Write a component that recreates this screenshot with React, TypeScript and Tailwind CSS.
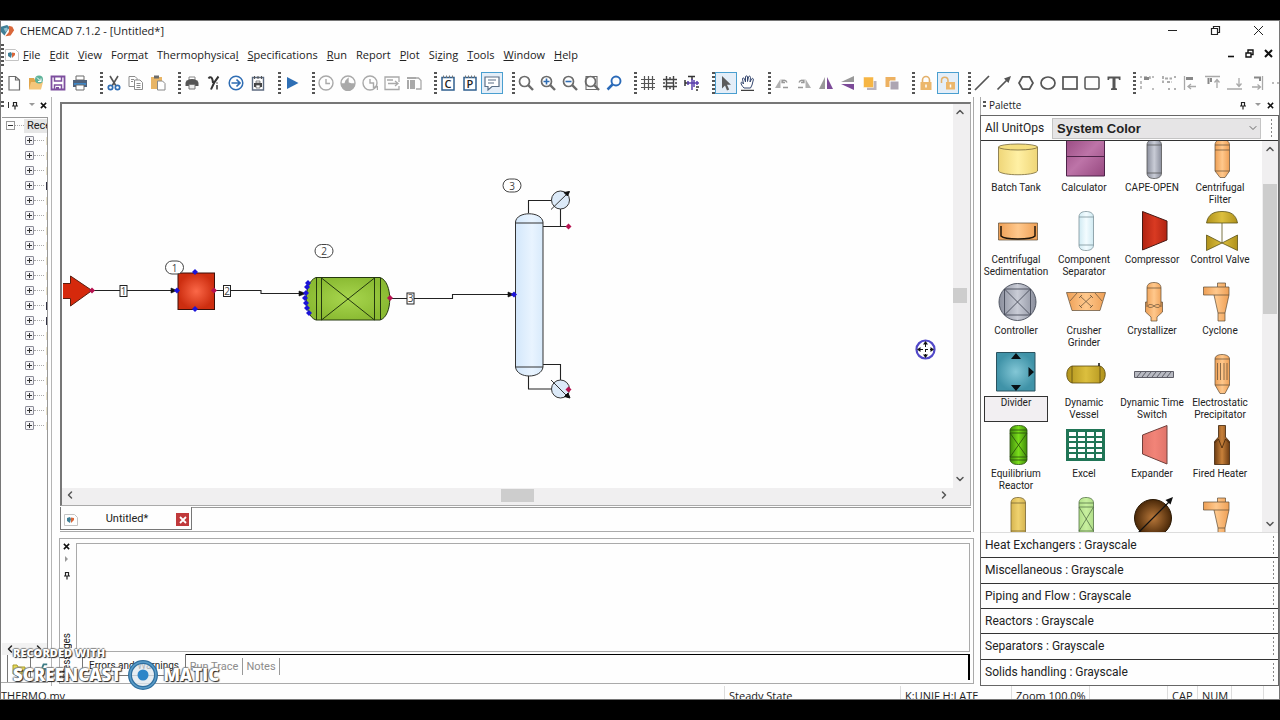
import type { ReactNode } from "react";
import { ChevronDown, ChevronLeft, ChevronRight, ChevronUp } from "lucide-react";

type Tool = { name: string; art: ReactNode; active?: boolean };

const G = "#6b6b6b";
const L = "#a9a9a9";

const lens = (color: string, inner?: ReactNode) => (
  <g fill="none" stroke={color} strokeWidth="1.7">
    <circle cx="6.5" cy="6.5" r="5" />
    <path d="M10.2 10.2 15 15" strokeWidth="2.4" />
    {inner}
  </g>
);

const clock = (inner: ReactNode) => (
  <g fill="none" stroke={L} strokeWidth="1.4">
    <circle cx="8" cy="8" r="7" />
    {inner}
  </g>
);

const clip = (letter: string) => (
  <g>
    <rect x="2" y="2.5" width="12" height="12.5" fill="#fff" stroke="#2f5f8f" strokeWidth="1.5" />
    <path d="M3.5 .5v2.5M6.5 .5v2.5M9.5 .5v2.5M12.5 .5v2.5" stroke="#777" strokeWidth="1" />
    <text x="8" y="13" fontSize="11" textAnchor="middle" fill="#222" className="font-['Open_Sans',sans-serif] font-semibold">{letter}</text>
  </g>
);

const groups: Tool[][] = [
  [
    { name: "New", art: <path d="M3 1.5h6.5L13.5 5v10H3zM9.5 1.5V5h4" fill="#fff" stroke={G} strokeWidth="1.2" /> },
    {
      name: "Open",
      art: (
        <g>
          <path d="M1 3h5l1 2h6v9H1z" fill="#e0a54c" />
          <path d="M3 7h12l-2 7.500H1z" fill="#f4c67b" />
          <circle cx="11" cy="4.500" r="4" fill="#5fb39a" />
          <path d="M9 2.500 13 6.500M13 3.500v3h-3" stroke="#fff" fill="none" />
        </g>
      ),
    },
    {
      name: "Save",
      art: (
        <g>
          <path d="M1.500 1.500h13v13h-13z" fill="#fff" stroke="#7d4e9e" strokeWidth="1.800" />
          <path d="M4.500 1v5h7V1M4.500 15v-5h7v5" fill="none" stroke="#7d4e9e" strokeWidth="1.500" />
          <path d="M6 12h3v2H6z" fill="#7d4e9e" />
        </g>
      ),
    },
    {
      name: "Print",
      art: (
        <g>
          <path d="M4 1h8v4H4z" fill="#fff" stroke={G} />
          <path d="M1 5h14v7H1z" fill="#50627a" />
          <path d="M2 8h12v2H2z" fill="#3f86c4" />
          <path d="M4 10h8v5H4z" fill="#fff" stroke={G} />
        </g>
      ),
    },
  ],
  [
    {
      name: "Cut",
      art: (
        <g fill="none">
          <path d="M4 1l6 10M12 1 6 11" stroke="#555" strokeWidth="1.600" />
          <circle cx="4.500" cy="12.500" r="2.200" stroke="#2f6db3" strokeWidth="1.700" />
          <circle cx="11.500" cy="12.500" r="2.200" stroke="#2f6db3" strokeWidth="1.700" />
        </g>
      ),
    },
    {
      name: "Copy",
      art: (
        <g fill="#fff" stroke="#8c8c8c">
          <path d="M1 1.500h6l2 2v8H1z" />
          <path d="M6.500 5h5.500l2.500 2.500v7h-8z" />
          <path d="M3 4.500h3M3 6.500h2M8.500 8.500h4M8.500 10.500h4M8.500 12.500h4" />
        </g>
      ),
    },
    {
      name: "Paste",
      art: (
        <g>
          <path d="M1 2h11v12H1z" fill="#e8b566" />
          <path d="M4 .5h5v3H4z" fill="#6b6b6b" />
          <path d="M7.500 6h5l2.500 2.500v6.500H7.500z" fill="#fff" stroke="#888" />
        </g>
      ),
    },
  ],
  [
    {
      name: "Report setup",
      art: (
        <g>
          <path d="M5 2h6v4H5z" fill="#fff" stroke="#888" />
          <path d="M1.500 8a6.500 4 0 0 1 13 0v3h-13z" fill="#555" />
          <path d="M5 9.500h6V14H5z" fill="#eee" stroke="#777" />
        </g>
      ),
    },
    {
      name: "Gamma",
      art: (
        <g fill="none" stroke="#333">
          <path d="M2.500 3.500C4.500 1 6.500 2 7 8M12.500 1.500C9.500 5 7 9 5 14.500" strokeWidth="2" />
          <path d="M11 10v4.500M11 7.500v1" strokeWidth="1.500" />
        </g>
      ),
    },
    {
      name: "Run stream",
      art: (
        <g fill="none" stroke="#2f6db3" strokeWidth="1.500">
          <circle cx="8" cy="8" r="6.800" />
          <path d="M3.500 8h8.500M8.500 4.500 12 8l-3.500 3.500" strokeWidth="1.700" />
        </g>
      ),
    },
    {
      name: "Clipboard report",
      art: (
        <g>
          <path d="M2.500 2.500h11v12.500h-11z" fill="#fff" stroke="#5d6b80" strokeWidth="1.400" />
          <path d="M4.500 1v3M8 1v3M11.500 1v3" stroke="#555" />
          <path d="M4 8h8v4H4z" fill="#444" />
          <path d="M6 6h4v2H6zM6 10h4v3H6z" fill="#fff" stroke="#555" strokeWidth=".7" />
        </g>
      ),
    },
  ],
  [{ name: "Run", art: <path d="M3 2 14.500 8 3 14z" fill="#2e6fb5" /> }],
  [
    { name: "History", art: clock(<path d="M8 4v4.500h4" />) },
    { name: "Level", art: clock(<path d="M2 9h3l1-3 2-2v4l3 1h3a6 6 0 0 1-12 1z" fill={L} />) },
    { name: "Schedule", art: clock(<path d="M8 4v4h3.500v4.500l4-1V15" />) },
    { name: "Export", art: <path d="M15 7V2H1v12.500h14V11M4 8.500h10M11 6l3 2.500-3 2.500M3 5h6" fill="none" stroke={L} strokeWidth="1.300" /> },
    {
      name: "Pages",
      art: (
        <g>
          <path d="M1 2h9v2H1zM1 5h2v9H1zM4 5h5v9H4z" fill={L} />
          <path d="M9.500 3h3L15 5.500v8.500h-5" fill="none" stroke={L} strokeWidth="1.300" />
        </g>
      ),
    },
  ],
  [
    { name: "Components", art: clip("C") },
    { name: "Properties", art: clip("P") },
    {
      name: "Comments",
      active: true,
      art: <path d="M1 2h14v9.500H8L4 15v-3.500H1zM4 5h8M4 8h6" fill="#fff" stroke="#5b6f86" strokeWidth="1.200" />,
    },
  ],
  [
    { name: "Zoom", art: lens(G) },
    { name: "Zoom in", art: lens(G, <path d="M6.500 3.500v6M3.500 6.500h6" stroke="#2f6db3" strokeWidth="1.600" />) },
    { name: "Zoom out", art: lens(G, <path d="M3.500 6.500h6" stroke="#2f6db3" strokeWidth="1.600" />) },
    { name: "Zoom page", art: lens(G, <path d="M2 1.500h11v13H2z" strokeWidth="1.100" />) },
    {
      name: "Find",
      art: (
        <g fill="none" stroke="#2a6ab8">
          <circle cx="10" cy="6" r="4.500" strokeWidth="1.900" />
          <path d="M6.500 9.500 1.500 14.500" strokeWidth="2.500" />
        </g>
      ),
    },
  ],
  [
    { name: "Grid", art: <path d="M4.500 1v14M8.500 1v14M12.500 1v14M1 4.500h14M1 8.500h14M1 12.500h14" stroke="#555" strokeWidth="1.200" /> },
    {
      name: "Snap to grid",
      art: <path d="M4.500 1v14M11.500 1v14M1 4.500h14M1 11.500h14M5 8h7M8 2v3M8 11v3M1 8h2M13 8h2" stroke="#444" strokeWidth="1.400" fill="none" />,
    },
    {
      name: "Align to stream",
      art: (
        <g fill="none" strokeWidth="1.500">
          <path d="M1 5v6M1 8h4M4 1.500h7M8 1v4M12 12h3M12 15h2" stroke="#333" />
          <path d="M4 6v4M8 4v11M10 5v7M5 8h10M13 6v4" stroke="#5a3fae" />
        </g>
      ),
    },
  ],
  [
    { name: "Select", active: true, art: <path d="M4 1v12.500l3-3 2 5 2.200-1-2.200-4.700H13z" fill="#5c5c5c" /> },
    {
      name: "Pan",
      art: (
        <g fill="none" stroke="#34466e" strokeWidth="1">
          <path d="M4 13C2 11 1 9 1 8s1-1.500 2.500 1L2.500 4c0-1.500 1.500-1.500 2 0l1 3L5.500 2c0-1.500 2-1.500 2 0v4.500l1-4.500c.5-1.500 2-1 2 .5L10 7l1.500-3c.8-1.300 2.200-.5 1.800 1L12 10l-1.500 3z" />
          <path d="M1 15.300h13" stroke="#111" />
        </g>
      ),
    },
  ],
  [
    {
      name: "Rotate left",
      art: (
        <g>
          <path d="M1 13 6.500 4v9z" fill="#b0b0b0" />
          <path d="M14 12.500H9M8 7.500c0-3 4-3 5 0M8 4.500v3h3" fill="none" stroke="#999" strokeWidth="1.300" />
        </g>
      ),
    },
    {
      name: "Rotate right",
      art: (
        <g>
          <path d="M15 13 9.500 4v9z" fill="#b0b0b0" />
          <path d="M2 12.500h5M8 7.500c0-3-4-3-5 0M8 4.500v3H5" fill="none" stroke="#999" strokeWidth="1.300" />
        </g>
      ),
    },
    {
      name: "Flip horizontal",
      art: (
        <g>
          <path d="M7 2v12H1z" fill="#999" />
          <path d="M9 2v12h6z" fill="#7c4a98" />
        </g>
      ),
    },
    {
      name: "Flip vertical",
      art: (
        <g>
          <path d="M14 1v6H1z" fill="#999" />
          <path d="M14 15V9H1z" fill="#7c4a98" />
        </g>
      ),
    },
    {
      name: "Bring to front",
      art: (
        <g>
          <path d="M5 6h9.500v9H5z" fill="#b9b3bd" />
          <path d="M1.500 2h10v10.500h-10z" fill="#f6b544" stroke="#fff" strokeWidth=".5" />
        </g>
      ),
    },
    {
      name: "Send to back",
      art: (
        <g>
          <path d="M1.500 2h10v10h-10z" fill="#edb161" />
          <path d="M6 6h9v9H6z" fill="#ada5b2" stroke="#fff" />
        </g>
      ),
    },
  ],
  [
    {
      name: "Lock",
      art: (
        <g>
          <path d="M4.500 7V5a3.500 3.500 0 0 1 7 0v2" fill="none" stroke="#e3b06a" strokeWidth="1.600" />
          <path d="M2.500 7h11v8h-11z" fill="#ecb76c" />
          <path d="M8 9.500v3" stroke="#fff" strokeWidth="1.500" />
        </g>
      ),
    },
    {
      name: "Unlock",
      active: true,
      art: (
        <g>
          <path d="M1.500 8V5.500a3.200 3.200 0 0 1 6.500 0V8" fill="none" stroke="#e3b06a" strokeWidth="1.500" />
          <path d="M6 7h9v7.500H6z" fill="#ecb76c" />
          <path d="M10.500 9.500v3" stroke="#fff" strokeWidth="1.500" />
        </g>
      ),
    },
  ],
  [
    { name: "Line", art: <path d="M1 15 15 1" stroke="#555" strokeWidth="1.700" /> },
    {
      name: "Arrow",
      art: (
        <g>
          <path d="M1.500 14.500 11 5" stroke="#555" strokeWidth="1.700" />
          <path d="M15 1 12.500 8 8 3.500z" fill="#555" />
        </g>
      ),
    },
    { name: "Polygon", art: <path d="M4.500 1.800h7L15 8l-3.500 6.200h-7L1 8z" fill="none" stroke="#555" strokeWidth="1.800" /> },
    { name: "Ellipse", art: <ellipse cx="8" cy="8" rx="7" ry="6" fill="none" stroke="#555" strokeWidth="1.700" /> },
    { name: "Rectangle", art: <rect x="1" y="2" width="14" height="12" fill="none" stroke="#555" strokeWidth="1.700" /> },
    { name: "Rounded rectangle", art: <rect x="1" y="2" width="14" height="12" rx="1.500" fill="none" stroke="#555" strokeWidth="1.500" /> },
    { name: "Text", art: <path d="M1.500 1.500h13V5H13l-.5-1.500h-3V13l1.500.5V15H5v-1.500L6.500 13V3.500h-3L3 5H1.500z" fill="#555" /> },
  ],
  [
    {
      name: "Group",
      art: (
        <g fill="none" stroke={L} strokeWidth="1.500">
          <path d="M2 6v9M5 2h6v3M2 1v2" strokeDasharray="3 2" />
          <path d="M5 3.500h5" stroke="#888" strokeWidth="3" />
          <path d="M14 1v2M14 13v2" />
        </g>
      ),
    },
    {
      name: "Ungroup",
      art: <path d="M2 1v7M4 3.500h7M6 7h5M14 1v2M14 13v2M8 13v2" stroke={L} strokeWidth="1.800" strokeDasharray="3 1.500" />,
    },
    {
      name: "Align left",
      art: (
        <g fill="none" stroke={L} strokeWidth="1.300">
          <path d="M1.500 1v14M5 11.500h8M8 9l-3 2.500L8 14" />
          <path d="M3 3.500h7" stroke="#888" strokeWidth="3" />
        </g>
      ),
    },
    {
      name: "Align top",
      art: (
        <g fill="none" stroke={L} strokeWidth="1.300">
          <path d="M0 1.500h15M12 13V5M9.500 7.500 12 4.500l2.500 3" />
          <path d="M3.500 3v6M6 3v4" stroke="#888" strokeWidth="2" />
        </g>
      ),
    },
    { name: "Align bottom", art: <path d="M0 14h15M12 3v8M9.500 8.500 12 11.500l2.500-3" fill="none" stroke={L} strokeWidth="1.300" /> },
    {
      name: "Align right",
      art: (
        <g fill="none" stroke={L} strokeWidth="1.300">
          <path d="M13.500 1v14M3 12h8M8.500 9.500l3 2.500-3 2.500" />
          <path d="M5 2.500h6V6" stroke="#888" strokeWidth="2" />
        </g>
      ),
    },
  ],
];

const menus: [string, string, string][] = [
  ["", "F", "ile"],
  ["", "E", "dit"],
  ["", "V", "iew"],
  ["For", "m", "at"],
  ["Thermophysica", "l", ""],
  ["", "S", "pecifications"],
  ["", "R", "un"],
  ["Report", "", ""],
  ["", "P", "lot"],
  ["Si", "z", "ing"],
  ["", "T", "ools"],
  ["", "W", "indow"],
  ["", "H", "elp"],
];

const edge = { stroke: "#5b4a35", strokeWidth: 0.7 };

const vessel = (fill: string, line = "#555", inner?: ReactNode) => (
  <g fill={fill} stroke={line} strokeWidth=".8">
    <path d="M13 6C13 2 16 .5 20 .5S27.500 2 27.500 6v28c0 4-3.500 5.500-7.500 5.500S13 38 13 34z" />
    <path d="M13 6h14.500M13 34h14.500" />
    {inner}
  </g>
);

const cyclone = (
  <path d="M1.500 5H15.500V1h8v4h3.500v8l-4 18v8h-7v-8L12 13H1.500zM15.500 5h8M12 13h15M16 31h7" fill="url(#orange)" {...edge} />
);

const units: { name: string; art: ReactNode; selected?: boolean }[] = [
  {
    name: "Batch Tank",
    art: (
      <g stroke="#77683a" strokeWidth=".8">
        <path d="M.5 8v24c3 5 36 5 39 0V8z" fill="url(#tank)" />
        <ellipse cx="20" cy="8" rx="19.500" ry="3" fill="#f5df80" />
      </g>
    ),
  },
  {
    name: "Calculator",
    art: (
      <g stroke="#4d2348">
        <path d="M.5-3h38v40H.5z" fill="url(#plum)" />
        <path d="M.5 17.500h38" />
      </g>
    ),
  },
  { name: "CAPE-OPEN", art: vessel("url(#steel)") },
  {
    name: "Centrifugal Filter",
    art: <path d="M13 6c0-4 3-5.500 7-5.500S27.500 2 27.500 6v26L23 38.500h-5L13 32zM13 6h14.500M13 11h14.500M13 32h14.500" fill="url(#orange)" {...edge} />,
  },
  {
    name: "Centrifugal Sedimentation",
    art: (
      <g>
        <path d="M.5 12h39v17H.5z" fill="url(#orange)" {...edge} />
        <path d="M3 15v10c4 4 30 4 34 0V15" fill="none" stroke="#20160a" strokeWidth="1.500" />
      </g>
    ),
  },
  { name: "Component Separator", art: vessel("url(#ice)", "#7c9299") },
  { name: "Compressor", art: <path d="M8.500.5 33 10v19L8.500 39z" fill="url(#red)" stroke="#471a14" /> },
  {
    name: "Control Valve",
    art: (
      <g fill="url(#gold)" stroke="#5c5316" strokeWidth=".8">
        <path d="M20 12v20" />
        <path d="M4.500 12C6 3 12 .5 20 .5S34 3 35.500 12zM4.500 24 20 32 4.500 39.500zM35.500 24 20 32l15.500 7.500z" />
      </g>
    ),
  },
  {
    name: "Controller",
    art: (
      <g fill="none" stroke="#454b58" strokeWidth=".9">
        <circle cx="19.500" cy="20" r="18.500" fill="url(#steel)" />
        <path d="M6.500 7h26v26h-26zM6.500 7l26 26M32.500 7l-26 26" />
      </g>
    ),
  },
  {
    name: "Crusher Grinder",
    art: (
      <g fill="none" {...edge}>
        <path d="M.5 10.500h39L34 28.500H6z" fill="url(#orange)" />
        <path d="M11 11 4 19M29 11l7 8M14 14l12 11M26 14 14 25M16 13l-3 3M24 13l3 3M13 23l3 3M27 23l-3 3" />
      </g>
    ),
  },
  {
    name: "Crystallizer",
    art: (
      <g {...edge} fill="url(#orange)">
        <path d="M13 6c0-4 3-5.500 7-5.500S27 2 27 6v14h1.500v10L23 35v4h-6v-4l-5.500-5V20H13zM13 6h14M13 20v5M27 20v5" />
        <path d="M14 24c0-2 4-2 6 0s6 2 6 0-4-2-6 0-6 2-6 0" fill="none" />
      </g>
    ),
  },
  { name: "Cyclone", art: cyclone },
  {
    name: "Divider",
    selected: true,
    art: (
      <g transform="translate(-2 -2)">
        <path d="M.5.500h38.500v38.500H.5z" fill="url(#teal)" stroke="#2a5360" />
        <path d="M20 1l5 6H15zM20 39l5-6H15zM38 20l-5.500-5v10z" fill="#081014" />
      </g>
    ),
  },
  {
    name: "Dynamic Vessel",
    art: (
      <g stroke="#5a4a0f" strokeWidth=".8">
        <path d="M6 12h28c7 2 7 15 0 17H6c-7-2-7-15 0-17z" fill="url(#gold)" />
        <path d="M6 12v17M34 12v17" />
        <path d="M33 12V9" stroke="#111" strokeWidth="1.500" />
      </g>
    ),
  },
  {
    name: "Dynamic Time Switch",
    art: (
      <g stroke="#5d5d66">
        <path d="M.5 17.500h39v6H.5z" fill="#b7b9c1" />
        <path d="m3 23 4-5M8 23l4-5M13 23l4-5M18 23l4-5M23 23l4-5M28 23l4-5M33 23l4-5" />
      </g>
    ),
  },
  {
    name: "Electrostatic Precipitator",
    art: <path d="M13 5c0-3 3-4.500 7-4.500S27.500 2 27.500 5v26L23 39.500h-5L13 31zM13 5h14.500M13 31h14.500M15.500 9v17M18.500 9v17M22 9v17M25 9v17" fill="url(#orange)" {...edge} />,
  },
  {
    name: "Equilibrium Reactor",
    art: (
      <g stroke="#274a0e" strokeWidth=".8">
        <path d="M12 5c1-3 3-4.500 8.500-4.500S28 2 29 5v30c-1 3-3 4.500-8.500 4.500S13 38 12 35z" fill="url(#green)" />
        <path d="M12 5h17M12 8h17M12 32h17M12 35h17M12 8l17 24M29 8 12 32" />
      </g>
    ),
  },
  {
    name: "Excel",
    art: (
      <g>
        <path d="M0 4h39v32H0z" fill="#207556" />
        <path d="M3 7h7v4H3zm9 0h7v4h-7zm9 0h7v4h-7zm9 0h6v4h-6zM3 13h7v3H3zm9 0h7v3h-7zm9 0h7v3h-7zm9 0h6v3h-6zM3 18h7v4H3zm9 0h7v4h-7zm9 0h7v4h-7zm9 0h6v4h-6zM3 24h7v3H3zm9 0h7v3h-7zm9 0h7v3h-7zm9 0h6v3h-6zM3 29h7v4H3zm9 0h7v4h-7zm9 0h7v4h-7zm9 0h6v4h-6z" fill="#fff" />
      </g>
    ),
  },
  { name: "Expander", art: <path d="M33 .5 8.500 10v19L33 39z" fill="url(#coral)" stroke="#70403c" /> },
  {
    name: "Fired Heater",
    art: (
      <g stroke="#3f230a" strokeWidth=".8">
        <path d="M16.500.5h7V12l4 4.500v23h-15v-23l4-4.500z" fill="url(#brown)" />
        <path d="M12.500 18l4-4 3.500 9 3.500-9 4 4" fill="none" />
      </g>
    ),
  },
  { name: "", art: vessel("url(#straw)", "#776532") },
  { name: "", art: vessel("url(#lime)", "#557348", <path d="M13 10h14.500M13 10 27.500 34M27.500 10 13 34" />) },
  {
    name: "",
    art: (
      <g>
        <circle cx="19" cy="21" r="18.500" fill="url(#ball)" stroke="#2a1804" />
        <path d="M4 36 36 4" stroke="#111" strokeWidth="1.200" />
        <path d="M39 0l-2.500 7.500L31.500 3z" fill="#111" />
      </g>
    ),
  },
  { name: "", art: cyclone },
];

const gradients: [string, string, string][] = [
  ["tank", "#fff0a4", "#efd678"],
  ["steel", "#c9ccd6", "#8a8e9c"],
  ["orange", "#ffc88c", "#ee9f55"],
  ["ice", "#f3fcff", "#d0eaf2"],
  ["red", "#d93a22", "#b02312"],
  ["gold", "#dcbf3e", "#b0921c"],
  ["green", "#7ade1c", "#3f8a0a"],
  ["coral", "#f28478", "#e0746a"],
  ["brown", "#c8813a", "#6d3c12"],
  ["straw", "#efd26f", "#d6b550"],
  ["lime", "#c8f09f", "#b0de88"],
];

const Gradients = () => (
  <svg className="absolute size-0" aria-hidden="true">
    <defs>
      {gradients.map(([id, light, dark]) => (
        <linearGradient key={id} id={id}>
          <stop offset="0" stopColor={dark} />
          <stop offset=".5" stopColor={light} />
          <stop offset="1" stopColor={dark} />
        </linearGradient>
      ))}
      <linearGradient id="plum" x2="1" y2="1">
        <stop offset="0" stopColor="#96487f" />
        <stop offset=".5" stopColor="#bd74a8" />
        <stop offset="1" stopColor="#96487f" />
      </linearGradient>
      <radialGradient id="teal">
        <stop offset="0" stopColor="#83c7d6" />
        <stop offset="1" stopColor="#4093a8" />
      </radialGradient>
      <radialGradient id="ball">
        <stop offset="0" stopColor="#b9783a" />
        <stop offset="1" stopColor="#4a2808" />
      </radialGradient>
      <radialGradient id="mixer">
        <stop offset="0" stopColor="#fb6848" />
        <stop offset="1" stopColor="#cd2e10" />
      </radialGradient>
      <radialGradient id="reactor">
        <stop offset="0" stopColor="#a8d64e" />
        <stop offset="1" stopColor="#8bbb33" />
      </radialGradient>
    </defs>
  </svg>
);

const Grip = () => (
  <span className="h-[22px] w-[3px] bg-[repeating-linear-gradient(#555_0_2px,transparent_2px_4px)]" />
);

const Logo = () => (
  <svg viewBox="0 0 16 16" className="size-3.5">
    <path d="M0 3 7 1l3 3-3 4-3 5L0 9z" fill="#3f7f96" />
    <path d="M9 2l4 1 2 4-4 6-6 1 4-5z" fill="#d9673a" />
    <path d="M3 5l4-1 1 3-3 2z" fill="#8fc0cf" />
  </svg>
);

const DocIcon = () => (
  <svg viewBox="0 0 14 12" className="h-3 w-3.5">
    <path d="M.5.500h10l3 3v8H.5z" fill="#fff" stroke="#c4c4c4" />
    <path d="M3 4l3-1 1 2-1 4-3-2z" fill="#3f7f96" />
    <path d="M7 3.500l3 .5v2L7 9z" fill="#d9673a" />
  </svg>
);

const Pin = () => (
  <svg viewBox="0 0 8 10" className="h-2.5 w-2">
    <path d="M2.500 2.500h3V6h-3zM1 6h6M4 6v3.500" fill="none" stroke="#222" strokeWidth="1.200" />
  </svg>
);

const Cross = () => (
  <svg viewBox="0 0 8 8" className="size-[7px]">
    <path d="M1 1l6 6M7 1 1 7" stroke="#111" strokeWidth="1.700" />
  </svg>
);

const Caret = () => (
  <svg viewBox="0 0 6 4" className="h-1 w-1.5">
    <path d="M0 0h6L3 3z" fill="#999" />
  </svg>
);

const dot = (x: number, y: number, color = "#1c14d8") => (
  <path key={`${x}-${y}`} d={`M${x - 3} ${y}l3-3 3 3-3 3z`} fill={color} />
);

const Flowsheet = () => (
  <svg viewBox="63 104 890 383" className="h-[383px] w-[890px] shrink-0" role="img" aria-label="Flowsheet">
    <defs>
      <linearGradient id="column">
        <stop offset="0" stopColor="#d3e7fb" />
        <stop offset=".6" stopColor="#e9f4ff" />
        <stop offset="1" stopColor="#d8eafb" />
      </linearGradient>
    </defs>
    <g fill="none" stroke="#222" strokeWidth="1.100">
      <path d="M92 290.500h85M214 290.500h47v3h44M390 298.500h62.500v-4H514" />
      <path d="M528.500 213v-12.500H551M560.500 209v17.500M543 226.500h24M528.500 376v13H551M543 364.500h17.500V381" />
    </g>
    <path d="M62 283.500h8.500V276L92 290.500 70.500 306v-7.500H62z" fill="#d5290c" stroke="#5b1c0e" />
    <rect x="178" y="273" width="36.500" height="36.500" fill="url(#mixer)" stroke="#3c0f08" />
    <g stroke="#24380f">
      <path d="M316 277.500h64c13 4 13 39 0 42.500h-64c-13-4-13-38 0-42.500z" fill="url(#reactor)" />
      <path d="M316.500 278v42M321.500 278v42M374.500 278v42M380.500 278v42M321.500 278l53 42M374.500 278l-53 42" fill="none" />
    </g>
    <g stroke="#333">
      <path d="M515.500 222c1-11 26-11 27.500 0v145c-1.500 12-26 12-27.500 0z" fill="url(#column)" />
      <path d="M515.500 223h27.500M515.500 367h27.500" />
    </g>
    <g fill="#dceaf8" stroke="#333">
      <circle cx="560.500" cy="200" r="9" />
      <circle cx="560.500" cy="389" r="9" />
      <path d="M551 209.500 569 192M551 380l18 18" />
    </g>
    <path d="M569.500 191.500l-2 4.500-3.500-3.500zM570 398l-5.500-1.500 3.500-3.500z" fill="#111" stroke="#111" />
    <path d="M171 288v5l6-2.500zM299 291v5l7-2.500zM508 292v5l6-2.500z" fill="#111" stroke="#111" strokeWidth=".6" />
    {[[195, 272], [195, 309], [177, 290.5], [308, 283], [307, 287], [306, 293], [305, 298], [306, 303], [307, 308], [309, 313], [514, 294.5]].map(([x, y]) => dot(x, y))}
    {[[92, 290.5], [214, 290.5], [390, 298], [568.5, 226.5], [568.5, 389.5]].map(([x, y]) => dot(x, y, "#b5124f"))}
    <g className="font-['Open_Sans',sans-serif]" fill="#444" fontSize="10" textAnchor="middle">
      {[["1", 174.5, 267.5], ["2", 324, 251], ["3", 512, 185.5]].map(([n, x, y]) => (
        <g key={n}>
          <rect x={+x - 9} y={+y - 6.5} width="18" height="13" rx="6.500" fill="#fff" stroke="#444" />
          <text x={x} y={+y + 4}>{n}</text>
        </g>
      ))}
      {[["1", 123.5, 291], ["2", 227, 291], ["3", 410.5, 298.5]].map(([n, x, y]) => (
        <g key={n}>
          <rect x={+x - 3.5} y={+y - 5.5} width="7" height="11" fill="#fff" stroke="#222" />
          <text x={x} y={+y + 3.5}>{n}</text>
        </g>
      ))}
    </g>
    <circle cx="925.500" cy="349.500" r="9" fill="#fff" stroke="#5148c8" strokeWidth="2.200" />
    <path d="M925.500 341l2.500 3.500h-5zM925.500 358l2.500-3.500h-5zM917 349.500l3.500-2.500v5zM934 349.500l-3.500-2.500v5z" fill="#111" />
    <path d="M925.500 344v11M920 349.500h11" stroke="#111" strokeDasharray="3 2" />
  </svg>
);

const LeftDock = () => (
  <aside className="flex w-[51px] shrink-0 flex-col border-r border-[#b5b5b5]">
    <div className="flex h-5 items-center pb-1">
      <span className="h-2 w-[3px] bg-[repeating-linear-gradient(#555_0_2px,transparent_2px_4px)]" />
      <span className="ml-1 h-1.5 w-px bg-[#333]" />
      <button aria-label="Pin" className="ml-0.5"><Pin /></button>
      <button aria-label="Menu" className="ml-2.5"><Caret /></button>
      <button aria-label="Close dock" className="ml-[5px]"><Cross /></button>
    </div>
    <div className="mr-[3px] ml-px flex min-h-0 flex-1 flex-col overflow-hidden border-t border-r border-[#999]">
      <div className="flex h-[15px] items-center pl-1">
        <button aria-label="Collapse" className="flex size-[9px] shrink-0 items-center justify-center border border-[#999]">
          <span className="h-px w-[5px] bg-[#333]" />
        </button>
        <span className="w-[9px] shrink-0 border-t border-dotted border-[#aaa]" />
        <span className="flex-1 overflow-hidden bg-[#e6e6e6] pl-[3px] text-[11px] leading-[14px] whitespace-nowrap">Recent</span>
      </div>
      <ul className="flex-1">
        {Array.from({ length: 20 }, (_, i) => (
          <li key={i} className="flex h-[15px] items-center pl-[23px]">
            <button aria-label={`Expand item ${i + 1}`} className="relative flex size-[9px] shrink-0 items-center justify-center rounded-[1px] border border-[#8d8d99] bg-[#f4f4f6]">
              <span className="h-px w-[5px] bg-[#333]" />
              <span className="absolute h-[5px] w-px bg-[#333]" />
            </button>
            <span className="w-2.5 shrink-0 border-t border-dotted border-[#aaa]" />
            <span className={[3, 11, 12].includes(i) ? "ml-auto h-2 w-px bg-[#334]" : "ml-auto h-2 w-px bg-[#e8e0c8]"} />
          </li>
        ))}
      </ul>
      <div className="flex h-3 items-center justify-between bg-[#f2f2f2] px-0.5">
        <ChevronLeft className="size-3" strokeWidth={3} />
        <ChevronRight className="size-3" strokeWidth={3} />
      </div>
    </div>
    <div className="mr-[3px] flex h-7 items-center gap-2 border-b border-[#aaa] pl-1.5">
      <button aria-label="Explorer" className="flex h-full w-[26px] items-center justify-center border-x border-[#777]">
        <svg viewBox="0 0 14 12" className="h-3 w-3.5"><path d="M1 2h4l1 2h7v7H1z" fill="#e8dc5a" stroke="#a69a2c" /></svg>
      </button>
      <svg viewBox="0 0 10 12" className="h-3 w-2.5"><path d="M9 1H5L3 6h4l-2 5H1" fill="none" stroke="#3d7c85" strokeWidth="2" /></svg>
    </div>
    <div className="h-[3px]" />
  </aside>
);

const Center = () => (
  <main className="ml-[7px] flex min-w-0 flex-1 flex-col">
    <section className="flex min-h-0 flex-1 flex-col border-r border-[#aaa] pt-[5px] pr-0.5 pl-px">
      <div className="flex min-h-0 flex-1 flex-col border border-t-2 border-l-2 border-[#aaa] border-t-[#777] border-l-[#777]">
        <div className="flex min-h-0 flex-1">
          <div className="min-w-0 flex-1 overflow-hidden pl-px"><Flowsheet /></div>
          <div className="flex w-[17px] shrink-0 flex-col items-center justify-between bg-[#f0eff0] pt-0.5 pr-[3px] pb-[3px]">
            <ChevronUp className="size-3" strokeWidth={3} color="#555" />
            <span className="h-[15px] w-3.5 bg-[#cdcdcd]" />
            <ChevronDown className="size-3" strokeWidth={3} color="#555" />
          </div>
        </div>
        <div className="flex h-[17px] shrink-0 items-center justify-between bg-[#f0eff0] pr-5 pb-[3px] pl-0.5">
          <ChevronLeft className="size-3" strokeWidth={3} color="#555" />
          <span className="ml-5 h-[13px] w-[33px] bg-[#cdcdcd]" />
          <ChevronRight className="size-3" strokeWidth={3} color="#555" />
        </div>
      </div>
      <div className="mt-px flex h-[25px] shrink-0 items-start border-b border-[#aaa]">
        <button className="flex h-[23px] w-[132px] items-center border-x border-b border-[#777] pt-[3px] pr-0.5 pl-[3px]">
          <DocIcon />
          <span className="flex-1 text-center text-[11px]">Untitled*</span>
          <span className="flex size-[13px] items-center justify-center bg-[#c0393b]">
            <svg viewBox="0 0 8 8" className="size-2"><path d="M1 1l6 6M7 1 1 7" stroke="#fff" strokeWidth="1.800" /></svg>
          </span>
        </button>
        <span className="flex-1 border-t border-[#999]" />
      </div>
    </section>
    <section className="mt-1.5 mb-0.5 flex h-[146px] shrink-0 border border-[#aaa]">
      <div className="flex w-4 shrink-0 flex-col items-center pt-1 pr-[3px]">
        <button aria-label="Close messages"><Cross /></button>
        <svg viewBox="0 0 4 6" className="mt-1.5 h-1.5 w-1"><path d="M0 0v6l3-3z" fill="#999" /></svg>
        <span className="mt-2 flex"><Pin /></span>
        <span className="mt-auto mb-1 rotate-180 text-[10px] leading-3 [writing-mode:vertical-rl]">Messages</span>
      </div>
      <div className="flex min-w-0 flex-1 flex-col pt-1 pr-[3px]">
        <div className="flex-1 border border-[#aaa]" />
        <div className="mt-0.5 mb-[3px] flex h-[26px] text-[11px] text-[#8c8c8c]">
          <div className="w-1.5 border-t border-[#222]" />
          <button className="h-[22px] w-[104px] border-x border-b border-[#777] pt-0.5 text-[10px] text-[#222]">Errors and Warnings</button>
          <div className="flex flex-1 border-t border-r-2 border-black pt-[3px]">
            <button className="h-[17px] w-[57px] border-r border-[#999] leading-4">Run Trace</button>
            <button className="h-[17px] w-[37px] border-r border-[#999] leading-4">Notes</button>
          </div>
        </div>
      </div>
    </section>
  </main>
);

const unitLines = (name: string) => {
  if (name === "Dynamic Time Switch") return ["Dynamic Time", "Switch"];
  return name.length > 13 ? name.split(" ") : [name];
};

const Palette = () => (
  <aside className="ml-1.5 flex w-[299px] shrink-0 flex-col">
    <div className="flex h-[18px] shrink-0 items-center border-l border-[#aaa] pr-[5px] pb-0.5 pl-0.5">
      <span className="h-2 w-[3px] bg-[repeating-linear-gradient(#555_0_2px,transparent_2px_4px)]" />
      <h2 className="ml-[3px] font-['Open_Sans',sans-serif] text-[10px]">Palette</h2>
      <button aria-label="Pin palette" className="ml-auto"><Pin /></button>
      <button aria-label="Palette menu" className="ml-2"><Caret /></button>
      <button aria-label="Close palette" className="ml-1.5"><Cross /></button>
    </div>
    <div className="flex min-h-0 flex-1 flex-col border border-[#666]">
      <div className="flex h-[25px] shrink-0 items-center border-b border-[#333] pl-1">
        <label htmlFor="scheme" className="w-[67px] text-xs">All UnitOps</label>
        <div className="relative w-[209px]">
          <select id="scheme" className="block h-[21px] w-full appearance-none border border-[#c4c4c4] bg-[#e6e5e6] pl-1 font-['Liberation_Sans',sans-serif] text-[13px] leading-[19px] font-bold">
            <option>System Color</option>
            <option>Grayscale</option>
          </select>
          <ChevronDown className="pointer-events-none absolute top-1 right-0.5 size-3" color="#666" />
        </div>
        <span className="ml-2.5 h-[18px] w-px bg-[repeating-linear-gradient(#888_0_2px,transparent_2px_4px)]" />
      </div>
      <div className="flex min-h-0 flex-1 overflow-hidden border-b border-[#ddd]">
        <ul className="-mt-1 grid h-[429px] min-w-0 flex-1 grid-cols-4 grid-rows-6 pr-2 pl-px">
          {units.map((u, i) => (
            <li key={i} className="flex min-w-0 flex-col items-center pt-0.5">
              <svg viewBox="0 0 40 40" className="ml-1 size-10 shrink-0 overflow-visible" aria-hidden="true">{u.art}</svg>
              <span className={u.selected ? "mt-0.5 h-[26px] w-16 border border-[#333] bg-[#f2eff2]" : "mt-0.5 h-[26px] w-16 border border-transparent"}>
                <span className="-mx-2 block text-center text-[10px] leading-3">
                  {unitLines(u.name).map((line) => <span key={line} className="block">{line}</span>)}
                </span>
              </span>
            </li>
          ))}
        </ul>
        <div className="flex w-4 shrink-0 flex-col items-center bg-[#f0eff0] pt-0.5">
          <ChevronUp className="size-3" strokeWidth={3} color="#555" />
          <span className="mt-[29px] h-[130px] w-3.5 bg-[#cdcdcd]" />
          <ChevronDown className="mt-auto mb-0.5 size-3" strokeWidth={3} color="#555" />
        </div>
      </div>
      <div className="grid h-[152px] shrink-0 grid-rows-6">
        {["Heat Exchangers", "Miscellaneous", "Piping and Flow", "Reactors", "Separators", "Solids handling"].map((n) => (
          <button key={n} className="flex items-center justify-between border-b border-[#333] pr-1 pl-1 text-left text-xs last:border-b-0">
            <span>{n} : Grayscale</span>
            <span className="h-[18px] w-px bg-[repeating-linear-gradient(#888_0_2px,transparent_2px_4px)]" />
          </button>
        ))}
      </div>
    </div>
  </aside>
);

const cells: [string, string][] = [
  ["Steady State", "w-44"],
  ["K:UNIF H:LATE", "w-[111px]"],
  ["Zoom 100.0%", "w-[78px]"],
  ["", "w-[78px]"],
  ["CAP", "w-[30px]"],
  ["NUM", "w-[34px]"],
  ["", "w-8"],
  ["", "w-4"],
];

export default function App() {
  return (
    <div className="flex h-screen flex-col overflow-hidden bg-black py-5 font-['Roboto',sans-serif] text-[#222]">
      <Gradients />
      <div className="relative flex min-h-0 flex-1 flex-col overflow-hidden border border-[#777] bg-[#fefefe]">
        <header className="flex h-5 shrink-0 items-center font-['Open_Sans',sans-serif]">
          <Logo />
          <h1 className="ml-[5px] text-[11px]">CHEMCAD 7.1.2 - [Untitled*]</h1>
          <div className="ml-auto flex items-center gap-8 pr-[15px] pb-0.5">
            <button aria-label="Minimize"><svg viewBox="0 0 11 11" className="size-[11px]"><path d="M1 5.500h9" stroke="#222" /></svg></button>
            <button aria-label="Restore"><svg viewBox="0 0 11 11" className="size-[11px]"><path d="M1.500 3.500h6v6h-6zM3.500 3V1.500h6v6H8" fill="none" stroke="#222" strokeWidth="1.200" /></svg></button>
            <button aria-label="Close"><svg viewBox="0 0 11 11" className="size-[11px]"><path d="M1 1l9 9M10 1 1 10" stroke="#222" /></svg></button>
          </div>
        </header>
        <nav className="flex h-7 shrink-0 items-center font-['Open_Sans',sans-serif] text-[11px]">
          <Grip />
          <span className="mr-1 ml-px"><DocIcon /></span>
          <div className="flex gap-[9px]">
            {menus.map(([a, b, c]) => (
              <button key={a + b + c}>{a}<span className="underline">{b}</span>{c}</button>
            ))}
          </div>
          <div className="ml-auto flex items-center gap-2.5 pr-1.5 pb-1">
            <button aria-label="Minimize document"><svg viewBox="0 0 9 9" className="size-[9px]"><path d="M2 7.500h6" stroke="#111" strokeWidth="1.600" /></svg></button>
            <button aria-label="Restore document"><svg viewBox="0 0 9 9" className="size-[9px]"><path d="M1 4h5v4H1zM3 4V1h5v4.500H6" fill="none" stroke="#111" strokeWidth="1.400" /></svg></button>
            <button aria-label="Close document"><svg viewBox="0 0 9 9" className="size-[9px]"><path d="M1 1l7 7M8 1 1 8" stroke="#111" strokeWidth="2" /></svg></button>
          </div>
        </nav>
        <div className="flex h-7 shrink-0 items-center pb-px" role="toolbar" aria-label="Main toolbar">
          {groups.map((group, g) => (
            <div key={g} className="flex shrink-0 items-center">
              <span className={g === 0 ? "flex w-0.5 justify-end" : g === 12 ? "flex w-[11px] justify-end" : "flex w-3 justify-end"}><Grip /></span>
              {group.map((t) => (
                <button key={t.name} aria-label={t.name} className={t.active ? "flex size-[22px] items-center justify-center border border-[#4a9fd0] bg-[#e4eef8]" : "flex size-[22px] items-center justify-center"}>
                  <svg viewBox="0 0 16 16" className="size-4 shrink-0" aria-hidden="true">{t.art}</svg>
                </button>
              ))}
            </div>
          ))}
          <span className="ml-1 w-2 border-t-2 border-dotted border-[#bbb]" />
        </div>
        <div className="flex min-h-0 flex-1">
          <LeftDock />
          <Center />
          <Palette />
        </div>
        <footer className="flex h-[13px] shrink-0 overflow-hidden font-['Open_Sans',sans-serif] text-[11px] leading-[19px]">
          <span className="flex-1">THERMO.my</span>
          {cells.map(([text, width], i) => (
            <span key={i} className={`${width} border-l border-[#ddd] pl-1 whitespace-nowrap`}>{text}</span>
          ))}
        </footer>
        <div className="pointer-events-none absolute bottom-2 left-3 font-['Open_Sans',sans-serif] font-extrabold text-white [text-shadow:1px_1px_1px_#222,-1px_0_1px_#777,0_-1px_1px_#888]">
          <p className="text-[11px] leading-3">RECORDED WITH</p>
          <div className="flex items-center gap-1 text-[17px] leading-8">
            <span>SCREENCAST</span>
            <svg viewBox="0 0 32 32" className="ml-0.5 size-8">
              <circle cx="16" cy="16" r="13" fill="#dfe7ee" fillOpacity=".75" stroke="#2f6f9f" strokeWidth="4" />
              <circle cx="16" cy="16" r="13" fill="none" stroke="#5a9cc8" strokeWidth="1.500" />
              <circle cx="16" cy="16" r="5.500" fill="#2d85c8" />
            </svg>
            <span>MATIC</span>
          </div>
        </div>
      </div>
    </div>
  );
}
